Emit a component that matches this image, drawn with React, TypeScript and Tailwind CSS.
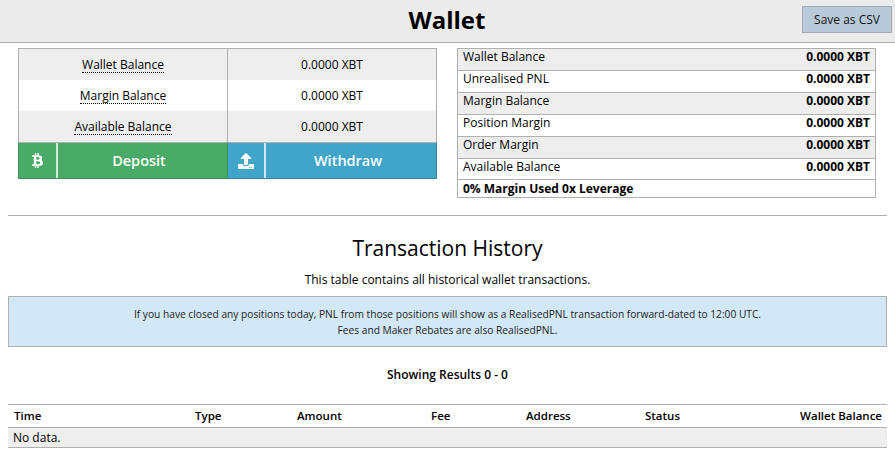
import React from "react";
import { FaBtc, FaUpload } from "react-icons/fa";

const left = ["Wallet Balance", "Margin Balance", "Available Balance"];
const right = ["Wallet Balance", "Unrealised PNL", "Margin Balance", "Position Margin", "Order Margin", "Available Balance"];
const cols = ["Time", "Type", "Amount", "Fee", "Address", "Status"];

export default function App() {
  return (
    <div className="w-[895px] h-[451px] overflow-hidden bg-white text-black text-[12px] font-['Open_Sans',sans-serif]">
      <header className="relative h-[43px] bg-[#ebebeb] border-b border-[#b0b0b0] flex items-center justify-center">
        <h1 className="text-[24px] font-bold leading-[40px] pb-[2px] -ml-[1px]">Wallet</h1>
        <button className="absolute right-[3px] top-[6px] w-[90px] h-[27px] bg-[#b8cad9] border border-[#a3a9ae] text-[12px] text-[#111]">Save as CSV</button>
      </header>

      <div className="flex gap-[20px] pl-[18px] pt-[5px]">
        <div className="w-[419px]">
          <div className="border-x border-t border-[#b0b0b0]">
            {left.map((l, i) => (
              <div key={l} className={`flex h-[31px] items-center text-center ${i % 2 === 0 ? "bg-[#eeeeee]" : "bg-white"}`}>
                <div className="w-[209px] h-full flex items-center justify-center border-r border-[#b0b0b0]">
                  <span className="border-b border-dotted border-black leading-[15px]">{l}</span>
                </div>
                <div className="flex-1">0.0000 XBT</div>
              </div>
            ))}
          </div>
          <div className="flex h-[37px] text-white text-[14.5px] font-semibold">
            <div className="w-[210px] flex items-stretch bg-[#4aaa67] border border-[#3f9159] border-t-[#b0b0b0]">
              <div className="w-[39px] flex items-center justify-center border-r-2 border-[#d5ebdc]"><FaBtc className="text-[15px]" /></div>
              <div className="flex-1 flex items-center justify-center pr-[7px]">Deposit</div>
            </div>
            <div className="w-[209px] flex items-stretch bg-[#40a5c8] border border-[#36869f] border-t-[#b0b0b0] border-l-0">
              <div className="w-[38px] flex items-center justify-center border-r-2 border-[#cfe8f1]"><FaUpload className="text-[16px]" /></div>
              <div className="flex-1 flex items-center justify-center pr-[6px]">Withdraw</div>
            </div>
          </div>
        </div>

        <div className="w-[419px] h-[150px] border border-[#b0b0b0] leading-[16px]">
          {right.map((l, i) => (
            <div key={l} className={`flex justify-between px-[5px] border-b border-[#b0b0b0] ${i === 5 ? "h-[21px]" : "h-[22px]"} ${i % 2 === 0 ? "bg-[#eeeeee]" : "bg-white"}`}>
              <span>{l}</span>
              <span className="font-bold">0.0000 XBT</span>
            </div>
          ))}
          <div className="px-[5px] pt-px font-bold">0% Margin Used 0x Leverage</div>
        </div>
      </div>

      <div className="mx-[8px] mt-[17px] border-t border-[#b0b0b0]"></div>

      <h2 className="mt-[16px] text-center text-[21px] leading-[32px]">Transaction History</h2>
      <p className="mt-[7px] text-center leading-[18px]">This table contains all historical wallet transactions.</p>

      <div className="mx-[8px] mt-[7px] h-[51px] border border-[#b0b0b0] bg-[#d3e8f6] text-center text-[10.2px] leading-[16px] pt-[9px] text-[#222]">
        <p>If you have closed any positions today, PNL from those positions will show as a RealisedPNL transaction forward-dated to 12:00 UTC.</p>
        <p>Fees and Maker Rebates are also RealisedPNL.</p>
      </div>

      <p className="mt-[19px] text-center font-semibold leading-[18px]">Showing Results 0 - 0</p>

      <div className="mx-[8px] mt-[20px] border-y border-[#b0b0b0]">
        <div className="grid grid-cols-[181px_102px_134px_95px_119px_1fr_auto] h-[23px] items-center pl-[6px] pr-[5px] text-[11.5px] font-semibold border-b border-[#b0b0b0]">
          {cols.map((c) => <span key={c}>{c}</span>)}
          <span className="text-right">Wallet Balance</span>
        </div>
        <div className="h-[19px] bg-[#eeeeee] px-[5px] leading-[19px]">No data.</div>
      </div>
    </div>
  );
}
